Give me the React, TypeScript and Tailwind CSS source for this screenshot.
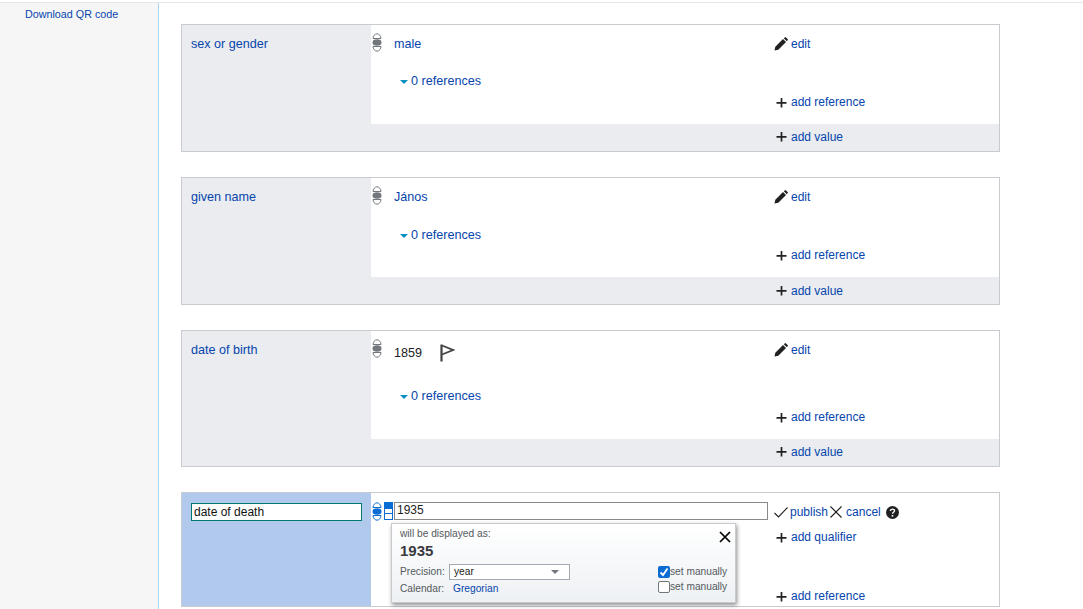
const Plus = () => (
  <svg width="11" height="11" viewBox="0 0 11 11" className="shrink-0 text-[#222]">
    <path d="M5.5 1v9.5M0.5 5.8h10" stroke="currentColor" strokeWidth="1.7" />
  </svg>
);

const Pencil = () => (
  <svg width="14" height="14" viewBox="0 0 14 14" className="shrink-0 text-[#202122]">
    <path d="M0.5 13.5l0.8-3.8L9 2l3 3-7.7 7.7zM9.8 1.2l0.9-0.8a1 1 0 0 1 1.3 0l1.6 1.6a1 1 0 0 1 0 1.3l-0.8 0.9z" fill="currentColor" />
  </svg>
);

const Rank = ({ color = "#72777d" }: { color?: string }) => (
  <svg width="10" height="19" viewBox="0 0 10 19" className="shrink-0">
    <path d="M1 5.5C1 3 3 0.8 5 0.8S9 3 9 5.5z" fill="none" stroke={color} strokeWidth="1" />
    <ellipse cx="5" cy="9.5" rx="4.5" ry="3.2" fill={color} />
    <path d="M1 13.5C1 16 3 18.2 5 18.2S9 16 9 13.5z" fill="none" stroke={color} strokeWidth="1" />
  </svg>
);

const Flag = () => (
  <svg width="15" height="18" viewBox="0 0 15 18" className="shrink-0 text-[#444]">
    <path d="M1.5 0.5v17" stroke="currentColor" strokeWidth="2.2" />
    <path d="M2 1.5l11 4.5-11 4.5" fill="none" stroke="currentColor" strokeWidth="1.8" />
  </svg>
);

const ToolLink = ({ label }: { label: string }) => (
  <div className="flex items-center gap-[4px]">
    <Plus />
    <span className="text-[#0645ad]">{label}</span>
  </div>
);

const statements = [
  { name: "sex or gender", value: "male", link: true, flag: false, refTop: "mt-[21px]", addTop: "mt-[5px]", bar: "h-[27px] pb-[2px]" },
  { name: "given name", value: "János", link: true, flag: false, refTop: "mt-[22px]", addTop: "mt-[4px]", bar: "h-[27px]" },
  { name: "date of birth", value: "1859", link: false, flag: true, refTop: "mt-[26px]", addTop: "mt-[5px]", bar: "h-[27px] pb-[2px]" },
];

const Statement = ({ s }: { s: (typeof statements)[number] }) => (
  <div className="flex border border-[#c8ccd1] bg-[#eaecf0] w-[819px]">
    <div className="w-[189px] shrink-0 pl-[9px] pt-[11px] text-[12.6px] text-[#0645ad]">{s.name}</div>
    <div className="flex-1 flex flex-col">
      <div className="bg-white pt-[8px] pb-[14px]">
        <div className="flex items-start">
          <div className="w-[403px] flex items-start pl-[1px]">
            <Rank />
            <div className={`ml-[12px] flex items-center text-[12.6px] ${s.flag ? "mt-[5px] text-[#202122]" : "mt-[3px] text-[#0645ad]"}`}>
              {s.value}
              {s.flag && <span className="ml-[18px]"><Flag /></span>}
            </div>
          </div>
          <div className="flex items-center gap-[3px] mt-[3px]">
            <Pencil />
            <span className="text-[#0645ad]">edit</span>
          </div>
        </div>
        <div className={`${s.refTop} pl-[29px] flex items-center gap-[3px] text-[12.6px] text-[#0645ad]`}>
          <span className="w-0 h-0 border-x-[4px] border-x-transparent border-t-[4px] border-t-[#0a8fc2] mt-[2px]" />
          0 references
        </div>
        <div className={`${s.addTop} pl-[405px]`}>
          <ToolLink label="add reference" />
        </div>
      </div>
      <div className={`${s.bar} flex items-center pl-[405px]`}>
        <ToolLink label="add value" />
      </div>
    </div>
  </div>
);

export default function App() {
  return (
    <div className="h-[609px] overflow-hidden bg-white text-[12px] leading-[16px] [font-family:'Liberation_Sans',Arial,sans-serif]">
      <div className="h-[3px] border-b border-[#e4e6e8] bg-white" />
      <div className="flex h-[606px]">
        <aside className="w-[159px] shrink-0 bg-[#f6f6f6] border-r border-[#a7d7f9] pl-[25px] pt-[4px] text-[10.75px] leading-[15px] text-[#0645ad]">
          Download QR code
        </aside>
        <main className="flex-1 pl-[22px] pt-[21px] flex flex-col gap-[25px]">
          {statements.map((s) => (
            <Statement key={s.name} s={s} />
          ))}
          <div className="flex border border-[#c8ccd1] w-[819px] h-[115px] shrink-0">
            <div className="w-[189px] shrink-0 bg-[#b0c9ec] pl-[9px] pt-[10px]">
              <div className="w-[171px] h-[18px] bg-white border border-[#00796b] pl-[2px] text-[#111] leading-[16px]">date of death</div>
            </div>
            <div className="flex-1 bg-white flex items-start pt-[9px] relative">
              <div className="flex items-start pl-[1px] w-[403px]">
                <Rank color="#0b6cd4" />
                <div className="ml-[2px] w-[9px] h-[18px] flex flex-col border border-[#0b6cd4]">
                  <div className="h-[6px] bg-[#0b6cd4]" />
                  <div className="h-[5px] border-b border-[#0b6cd4]" />
                </div>
                <div className="ml-[1px] w-[374px] h-[18px] border border-[#8a8a8a] pl-[2px] text-[#222] leading-[14px]">1935</div>
              </div>
              <div className="flex items-center mt-[2px]">
                <svg width="14" height="11" viewBox="0 0 14 11" className="shrink-0 text-[#222]">
                  <path d="M0.5 6l4 4L13.5 0.5" fill="none" stroke="currentColor" strokeWidth="1.1" />
                </svg>
                <span className="ml-[2px] text-[#0645ad]">publish</span>
                <svg width="12" height="12" viewBox="0 0 12 12" className="ml-[2px] shrink-0 text-[#222]">
                  <path d="M0.5 0.5l11 11M11.5 0.5l-11 11" stroke="currentColor" strokeWidth="1.2" />
                </svg>
                <span className="ml-[4px] text-[#0645ad]">cancel</span>
                <svg width="13" height="13" viewBox="0 0 13 13" className="ml-[5px] shrink-0">
                  <circle cx="6.5" cy="6.5" r="6.5" fill="#202122" />
                  <path d="M4.5 5c0-1.2 0.9-1.9 2-1.9s2 0.7 2 1.7c0 1.5-2 1.4-2 3" fill="none" stroke="#fff" strokeWidth="1.4" />
                  <rect x="5.7" y="9" width="1.6" height="1.6" fill="#fff" />
                </svg>
              </div>
              <div className="absolute left-[405px] top-[36px]">
                <ToolLink label="add qualifier" />
              </div>
              <div className="absolute left-[405px] top-[95px]">
                <ToolLink label="add reference" />
              </div>
              {/* date preview popup */}
              <div className="absolute left-[20px] top-[30px] w-[345px] h-[80px] border border-[#c8ccd1] bg-gradient-to-b from-white to-[#eef1f4] shadow-[1px_2px_4px_rgba(0,0,0,0.45)] text-[#54595d] text-[10.2px] leading-[12px] pl-[8px] pt-[4px]">
                <div>will be displayed as:</div>
                <div className="mt-[2px] text-[15px] leading-[18px] font-bold text-[#3a3a3f]">1935</div>
                <div className="mt-[4px] flex items-center h-[16px]">
                  <span className="w-[49px]">Precision:</span>
                  <div className="w-[121px] h-[16px] border border-[#a2a9b1] bg-white flex items-center justify-between pl-[4px] pr-[10px] text-[#222]">
                    year
                    <span className="w-0 h-0 border-x-[4px] border-x-transparent border-t-[4px] border-t-[#72777d]" />
                  </div>
                </div>
                <div className="mt-[2px] flex items-center h-[14px]">
                  <span className="w-[53px]">Calendar:</span>
                  <span className="text-[#0645ad]">Gregorian</span>
                </div>
                <svg width="12" height="12" viewBox="0 0 12 12" className="absolute right-[4px] top-[7px] text-black">
                  <path d="M1 1l10 10M11 1L1 11" stroke="currentColor" strokeWidth="1.7" />
                </svg>
                <div className="absolute left-[266px] top-[42px] flex items-center">
                  <span className="w-[12px] h-[12px] rounded-[2px] bg-[#0b6cd4] flex items-center justify-center">
                    <svg width="10" height="10" viewBox="0 0 10 10">
                      <path d="M1.5 5.5l2.5 2.5L8.5 1.5" fill="none" stroke="#fff" strokeWidth="1.8" />
                    </svg>
                  </span>
                  set manually
                </div>
                <div className="absolute left-[266px] top-[57px] flex items-center">
                  <span className="w-[12px] h-[12px] rounded-[2px] border border-[#72777d] bg-white" />
                  set manually
                </div>
              </div>
            </div>
          </div>
        </main>
      </div>
    </div>
  );
}
